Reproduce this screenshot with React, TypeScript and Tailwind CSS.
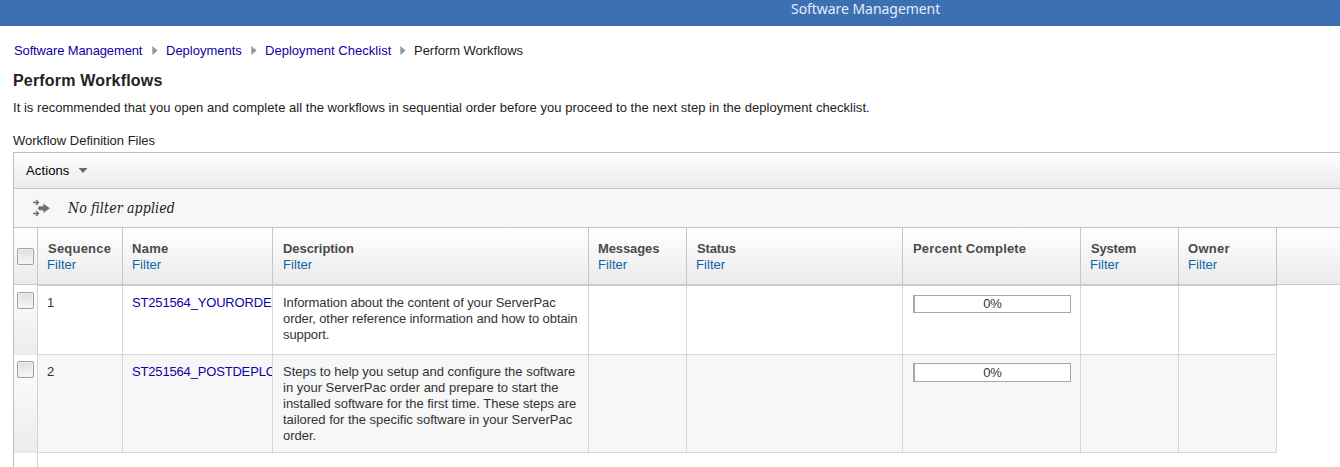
import React from "react";

type Row = { seq: string; name: string; description: string; height: string; shade: string; tracking: string; bar: string };

const GRID = "grid grid-cols-[24px_85px_150px_316px_98px_216px_178px_98px_98px]";

const columns = [
  { label: "Sequence", filter: true, pad: "pl-[9px]", labelStyle: "pl-px tracking-[0.22px]" },
  { label: "Name", filter: true, pad: "pl-[9px]", labelStyle: "tracking-[0.3px]" },
  { label: "Description", filter: true, pad: "pl-[10px]", labelStyle: "tracking-[-0.06px]" },
  { label: "Messages", filter: true, pad: "pl-[9px]", labelStyle: "tracking-[-0.1px]" },
  { label: "Status", filter: true, pad: "pl-[9px]", labelStyle: "pl-px tracking-[-0.15px]" },
  { label: "Percent Complete", filter: false, pad: "pl-[10px]", labelStyle: "tracking-[0.17px]" },
  { label: "System", filter: true, pad: "pl-[9px]", labelStyle: "pl-px tracking-[-0.2px]" },
  { label: "Owner", filter: true, pad: "pl-[9px]", labelStyle: "tracking-[0.3px]" },
];

const rows: Row[] = [
  {
    seq: "1",
    name: "ST251564_YOURORDE",
    description:
      "Information about the content of your ServerPac order, other reference information and how to obtain support.",
    height: "h-[69px]",
    shade: "bg-white",
    tracking: "tracking-[-0.09px]",
    bar: "mt-[9px] h-[18px] leading-[15px]",
  },
  {
    seq: "2",
    name: "ST251564_POSTDEPLO",
    description:
      "Steps to help you setup and configure the software in your ServerPac order and prepare to start the installed software for the first time. These steps are tailored for the specific software in your ServerPac order.",
    height: "h-[98px]",
    shade: "bg-[#f7f7f7]",
    tracking: "tracking-[-0.01px]",
    bar: "mt-2 h-[19px] leading-[17px]",
  },
];

function Crumb({ children, className }: { children: React.ReactNode; className: string }) {
  return (
    <>
      <a className={`text-[#1000a8] ${className}`}>{children}</a>
      <svg width="6" height="9" viewBox="0 0 6 9" className="mr-2 ml-[9px] shrink-0">
        <path d="M0.3 0 L5.7 4.5 L0.3 9 Z" fill="#969696" />
      </svg>
    </>
  );
}

function Check() {
  return (
    <span className="block h-[17px] w-[17px] rounded-[2px] border border-[#a0a0a0] bg-linear-to-b from-[#dedede] to-[#f8f8f8] shadow-[inset_0_0_0_1px_#f0f0f0]" />
  );
}

export default function App() {
  return (
    <div className="h-[467px] overflow-hidden bg-white font-['Liberation_Sans',Arial,sans-serif] text-[13px] leading-4 text-[#222]">
      <header className="h-[26px] bg-[#3d70b2] pl-[791px] font-['Noto_Sans',sans-serif] text-[14px] leading-[18px] tracking-[-0.05px] whitespace-nowrap text-[#e4edf8]">
        Software Management
      </header>

      <nav className="flex h-[49px] items-center pl-[14px] whitespace-nowrap">
        <Crumb className="w-[129px] tracking-[-0.13px]">Software Management</Crumb>
        <Crumb className="w-[76px]">Deployments</Crumb>
        <Crumb className="w-[126px] tracking-[0.03px]">Deployment Checklist</Crumb>
        <span className="tracking-[-0.03px]">Perform Workflows</span>
      </nav>

      <div className="pl-[13px]">
        <h1 className="-mt-1 text-[16px] leading-[20px] font-bold tracking-[0.18px]">Perform Workflows</h1>
        <p className="mt-[9px] tracking-[0.032px] whitespace-nowrap">
          It is recommended that you open and complete all the workflows in sequential order before you proceed to the
          next step in the deployment checklist.
        </p>
        <p className="mt-[17px] h-[19px]">Workflow Definition Files</p>

        <section className="h-[320px] border-t border-l border-[#bdbdbd]">
          <div className="flex h-9 items-center border-b border-[#c6c6c6] bg-linear-to-b from-white to-[#ebebeb] pl-3 text-black">
            <span className="tracking-[0.12px]">Actions</span>
            <svg width="10" height="5" viewBox="0 0 10 5" className="ml-[9px]">
              <path d="M0.5 0 H9.5 L5 5 Z" fill="#6b6b6b" />
            </svg>
          </div>

          <div className="flex h-[39px] items-center border-b border-[#c6c6c6] bg-[#f7f7f7] pl-[18px]">
            <svg width="19" height="18" viewBox="0 0 19 18" fill="none" stroke="#6d7177">
              <path d="M1 3.5 H6 M4 1 L6.5 3.5 L4 6 M1 14.5 H6 M4 12 L6.5 14.500 L4 17" strokeWidth="1.3" />
              <path
                d="M7 7.500 H11.500 V5 L17.500 9.300 L11.500 13.500 V11 H7 Q5.300 9.300 7 7.500 Z"
                fill="#6d7177"
                stroke="#6d7177"
                strokeWidth="0.5"
              />
            </svg>
            <span className="ml-[17px] font-['DejaVu_Serif_Condensed','DejaVu_Serif',serif] text-[14px] tracking-[0.11px] text-[#222] italic">
              No filter applied
            </span>
          </div>

          <div className="h-[57px] border-b border-[#c9c9c9] bg-linear-to-b from-white to-[#ebebeb]">
            <div className={GRID}>
              <div className="h-[57px] border-r border-[#c6c6c6] pt-5 pl-[3px]">
                <Check />
              </div>
              {columns.map((c) => (
                <div
                  key={c.label}
                  className={`h-[58px] border-r border-b-2 border-r-[#c6c6c6] border-b-[#cdcdcd] pt-[13px] whitespace-nowrap ${c.pad}`}
                >
                  <div className={`font-bold text-[#4a4a4a] ${c.labelStyle}`}>{c.label}</div>
                  {c.filter && <a className="block tracking-[0.06px] text-[#0d63a5]">Filter</a>}
                </div>
              ))}
            </div>
          </div>

          <div className="grid grid-cols-[24px_1fr]">
            <div className="h-px border-r border-[#d2d2d2]" />
          </div>
          {rows.map((r) => (
            <div key={r.seq} className={`${GRID} ${r.height} text-[#333]`}>
              <div className="border-r border-[#d2d2d2] bg-linear-to-b from-white to-[#ebebeb] pt-1.5 pl-[3px]">
                <Check />
              </div>
              <div className={`border-r border-b border-[#d6d6d6] pt-[9px] pl-[9px] ${r.shade}`}>{r.seq}</div>
              <div className={`overflow-hidden border-r border-b border-[#d6d6d6] pt-[9px] pl-[9px] ${r.shade}`}>
                <a className="tracking-[-0.17px] text-[#1000a8]">{r.name}</a>
              </div>
              <div className={`border-r border-b border-[#d6d6d6] pt-[9px] pr-[5px] pl-[10px] ${r.tracking} ${r.shade}`}>
                {r.description}
              </div>
              <div className={`border-r border-b border-[#d6d6d6] ${r.shade}`} />
              <div className={`border-r border-b border-[#d6d6d6] ${r.shade}`} />
              <div className={`border-r border-b border-[#d6d6d6] pl-[10px] ${r.shade}`}>
                <div
                  className={`w-[158px] border border-l-2 border-[#a6a6a6] bg-white text-center tracking-[-0.2px] ${r.bar}`}
                >
                  0%
                </div>
              </div>
              <div className={`border-r border-b border-[#d6d6d6] ${r.shade}`} />
              <div className={`border-r border-b border-[#d6d6d6] ${r.shade}`} />
            </div>
          ))}
          <div className="h-5 w-6 border-r border-[#d6d6d6]" />
        </section>
      </div>
    </div>
  );
}
